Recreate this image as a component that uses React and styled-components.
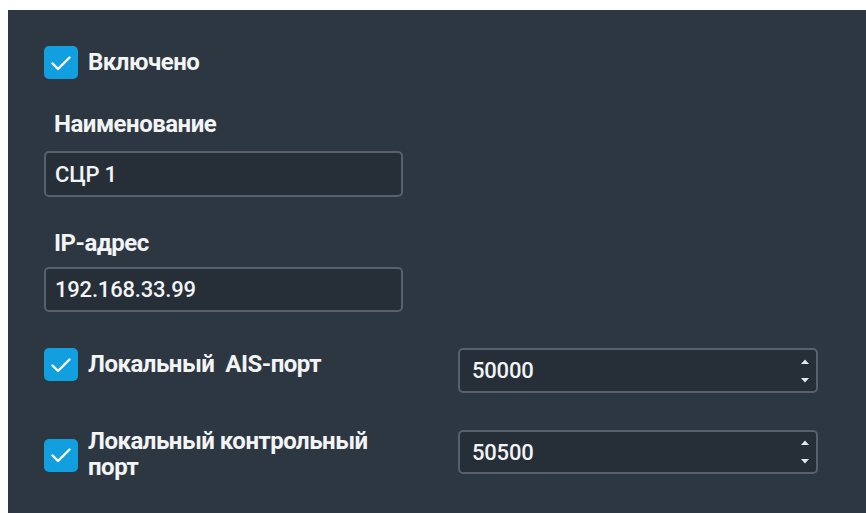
import React from "react";
import styled, { createGlobalStyle } from "styled-components";

const Global = createGlobalStyle`
  html, body { margin: 0; padding: 0; background: #ffffff; }
  body { font-family: Roboto, "Noto Sans", sans-serif; }
  * { box-sizing: border-box; }
`;

const Panel = styled.div`
  margin: 10px 0 0 8px;
  height: 503px;
  background: #2d3741;
  padding: 36px 0 0 36px;
  color: #f2f4f6;
  font-family: Roboto, "Noto Sans", sans-serif;
`;

const CheckRow = styled.label`
  display: flex;
  align-items: center;
  gap: 10px;
  font-size: 24px;
  font-weight: 700;
  letter-spacing: -0.5px;
  line-height: 26px;
`;

const CheckText = styled.span`
  margin-top: -2px;
`;

const Box = styled.span`
  flex: none;
  width: 34px;
  height: 33px;
  border-radius: 5px;
  background: #129fe0;
  display: flex;
  align-items: center;
  justify-content: center;
`;

const Field = styled.div`
  display: flex;
  flex-direction: column;
  margin-top: ${(p) => p.$top}px;
`;

const FieldLabel = styled.div`
  padding-left: 10px;
  font-size: 24px;
  font-weight: 700;
  letter-spacing: -0.5px;
  line-height: 24px;
  margin-bottom: ${(p) => p.$gap}px;
`;

const TextBox = styled.div`
  width: 359px;
  height: ${(p) => p.$h}px;
  border: 2px solid #55616c;
  border-radius: 5px;
  background: #262e37;
  display: flex;
  align-items: center;
  padding: 0 9px;
  font-size: 22px;
  font-weight: 500;
  letter-spacing: -0.2px;
`;

const PortRow = styled.div`
  display: grid;
  grid-template-columns: 414px 360px;
  align-items: start;
  margin-top: ${(p) => p.$top}px;
`;

const Spin = styled.div`
  height: ${(p) => p.$h}px;
  border: 2px solid #55616c;
  border-radius: 5px;
  background: #262e37;
  display: flex;
  align-items: center;
  justify-content: space-between;
  padding: 0 7px 0 12px;
  font-size: 22px;
  font-weight: 500;
  letter-spacing: -0.2px;
`;

const Arrows = styled.span`
  display: flex;
  flex-direction: column;
  justify-content: space-between;
  height: 24px;
`;

const Check = () => (
  <Box>
    <svg width="22" height="16" viewBox="0 0 22 16">
      <path d="M2.5 8.5 L8 14 L19.5 2.5" fill="none" stroke="#ffffff" strokeWidth="2.4" strokeLinecap="round" strokeLinejoin="round" />
    </svg>
  </Box>
);

const Arrow = ({ up }) => (
  <svg width="8" height="5" viewBox="0 0 8 5">
    <path d={up ? "M0 5 L4 0.5 L8 5 Z" : "M0 0 L4 4.5 L8 0 Z"} fill="#e6e9ec" />
  </svg>
);

const NumberBox = ({ value, h }) => (
  <Spin $h={h}>
    <span>{value}</span>
    <Arrows>
      <Arrow up />
      <Arrow />
    </Arrows>
  </Spin>
);

export default function App() {
  return (
    <>
      <Global />
      <Panel>
        <CheckRow>
          <Check />
          <CheckText>Включено</CheckText>
        </CheckRow>

        <Field $top={33}>
          <FieldLabel $gap={15}>Наименование</FieldLabel>
          <TextBox $h={46}>СЦР 1</TextBox>
        </Field>

        <Field $top={34}>
          <FieldLabel $gap={12}>IP-адрес</FieldLabel>
          <TextBox $h={45}>192.168.33.99</TextBox>
        </Field>

        <PortRow $top={36}>
          <CheckRow>
            <Check />
            <CheckText>Локальный&nbsp; AIS-порт</CheckText>
          </CheckRow>
          <NumberBox value="50000" h={45} />
        </PortRow>

        <PortRow $top={37}>
          <CheckRow>
            <Check />
            <CheckText>
              Локальный контрольный
              <br />
              порт
            </CheckText>
          </CheckRow>
          <NumberBox value="50500" h={44} />
        </PortRow>
      </Panel>
    </>
  );
}
